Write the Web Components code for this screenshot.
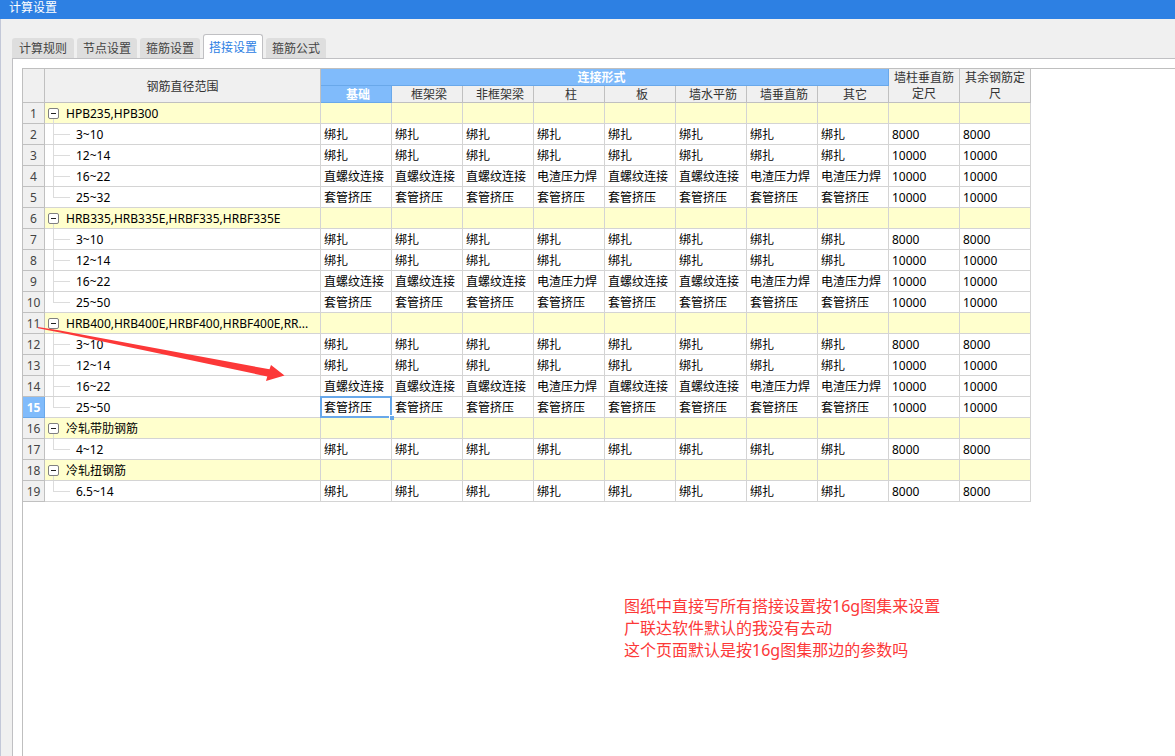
<!DOCTYPE html>
<html lang="zh-CN">
<head>
<meta charset="utf-8">
<title>计算设置</title>
<style>
  html, body { margin: 0; height: 100%; }
  body { font: 12px/20px "Noto Sans", "Noto Sans CJK SC", sans-serif; color: #000; background: #f0f0f0; overflow: hidden; }
</style>
</head>
<body>
<settings-window>
  <title-bar slot="title">计算设置</title-bar>
  <tab-strip slot="tabs">
    <tab-item>计算规则</tab-item>
    <tab-item>节点设置</tab-item>
    <tab-item>箍筋设置</tab-item>
    <tab-item active>搭接设置</tab-item>
    <tab-item>箍筋公式</tab-item>
  </tab-strip>
  <lap-table></lap-table>
  <pointer-arrow></pointer-arrow>
  <sticky-note>图纸中直接写所有搭接设置按16g图集来设置<br>广联达软件默认的我没有去动<br>这个页面默认是按16g图集那边的参数吗</sticky-note>
</settings-window>

<template id="window-tpl">
  <style>
    :host { display: flex; flex-direction: column; min-height: 100%; position: relative; }
    .body { flex: 1; display: flex; flex-direction: column; padding: 15px 0 0 11px; border-left: 1px solid #c3c8d8; }
    .panel { flex: 1; display: flex; margin-top: -1px; background: #fff; border: solid #c0c0c3; border-width: 1px 0 0 1px; padding: 9px 0 0 9px; }
    .sheet { flex: 1; border: solid #bfbfbf; border-width: 1px 0 0 1px; }
  </style>
  <slot name="title"></slot>
  <div class="body">
    <slot name="tabs"></slot>
    <main class="panel"><div class="sheet"><slot></slot></div></main>
  </div>
</template>

<template id="title-tpl">
  <style>
    :host { display: block; height: 19px; font-family: "Noto Sans CJK SC", sans-serif; line-height: 13px; padding-left: 9px; background: #2d80e3; color: #fff; }
  </style>
  <slot></slot>
</template>

<template id="strip-tpl">
  <style>:host { display: flex; align-items: flex-end; gap: 3px; position: relative; height: 25px; }</style>
  <slot></slot>
</template>

<template id="tab-tpl">
  <style>
    :host { display: block; align-self: flex-end; margin-bottom: 1px; }
    :host(:first-child) button { padding: 0 7px; }
    button { display: block; height: 20px; padding: 0 6px; border: 0; border-radius: 3px 3px 0 0; background: #dedede; color: #444; font: inherit; line-height: 22px; }
    :host([active]) { margin-bottom: 0; }
    :host([active]) button { height: 25px; padding: 0 5px; border: 1px solid #c0c0c3; border-bottom: 0; background: #fff; color: #2d80e3; line-height: 26px; }
  </style>
  <button type="button" role="tab"><slot></slot></button>
</template>

<template id="table-tpl">
  <style>
    :host { display: block; }
    table { table-layout: fixed; width: 1008px; border-collapse: separate; border-spacing: 0; }
    .num { width: 22px; } .name { width: 276px; }
    th, td { box-sizing: border-box; padding: 0; border: solid #d4d4d4; border-width: 0 1px 1px 0; overflow: hidden; }
    thead th { height: 17px; padding-top: 2px; background: #f0f0f0; border-color: #c0c0c0; color: #333; font-weight: 400; line-height: 14px; }
    thead .tall { padding-top: 1px; line-height: 16px; }
    thead .span { padding-right: 6px; }
    thead .sub { padding-left: 4px; }
    thead .hot, tbody .hot { background: #80bbfb; border-color: #69a8ea; color: #fff; font-weight: 700; }
    tbody th, td { height: 21px; padding-top: 2px; line-height: 18px; }
    tbody th { background: #f0f0f0; border-color: #c0c0c0; color: #444; font-weight: 400; text-align: center; }
    td { padding-left: 3px; white-space: nowrap; }
    .group td { background: #ffffcd; }
    td.label { position: relative; padding-left: 31px; }
    .group td.label { padding-left: 21px; }
    .label button { position: absolute; left: 3px; top: 5px; width: 11px; height: 11px; padding: 0; border: 1px solid #808080; border-radius: 2px; background: #fff; }
    .label button::before { content: ""; position: absolute; left: 2px; top: 4px; width: 5px; height: 1px; background: #222; }
    .group .label::before { content: ""; position: absolute; left: 8px; top: 16px; bottom: 0; border-left: 1px solid #dcdcdc; }
    .leaf .label::before { content: ""; position: absolute; left: 8px; top: 0; bottom: 0; border-left: 1px solid #dcdcdc; }
    .leaf.last .label::before { bottom: 10px; }
    .leaf .label::after { content: ""; position: absolute; left: 8px; top: 10px; width: 17px; border-top: 1px solid #dcdcdc; }
    td.current { position: relative; overflow: visible; }
    td.current::before { content: ""; position: absolute; inset: -1px; border: 2px solid #69a8ea; }
    td.current::after { content: ""; position: absolute; right: -3px; bottom: -3px; width: 4px; height: 4px; background: #69a8ea; border: solid #fff; border-width: 1px 0 0 1px; }
  </style>
  <table>
    <colgroup><col class="num"><col class="name"><col span="10"></colgroup>
    <thead>
      <tr><th rowspan="2"></th><th rowspan="2">钢筋直径范围</th><th class="hot span" colspan="8">连接形式</th><th class="tall" rowspan="2">墙柱垂直筋定尺</th><th class="tall" rowspan="2">其余钢筋定尺</th></tr>
      <tr><th class="sub hot">基础</th><th class="sub">框架梁</th><th class="sub">非框架梁</th><th class="sub">柱</th><th class="sub">板</th><th class="sub">墙水平筋</th><th class="sub">墙垂直筋</th><th class="sub">其它</th></tr>
    </thead>
    <tbody></tbody>
  </table>
</template>

<template id="arrow-tpl">
  <style>
    :host { position: absolute; left: 36px; top: 325px; pointer-events: none; }
    svg { display: block; }
  </style>
  <svg width="252" height="60" viewBox="36 325 252 60" aria-hidden="true">
    <path d="M38 327 L60 330.5 L269.5 369.3 L271 365 L284.5 375.5 L266 381 L267.3 376.5 L60 332.6 L38 328.2 Z" fill="#fc3838"/>
  </svg>
</template>

<template id="note-tpl">
  <style>:host { position: absolute; left: 624px; top: 595px; color: #fc3838; font-size: 16px; line-height: 22px; white-space: nowrap; }</style>
  <slot></slot>
</template>

<script>
  const define = (name, templateId, setup) => customElements.define(name, class extends HTMLElement {
    constructor() {
      super();
      const root = this.attachShadow({ mode: "open" });
      root.append(document.getElementById(templateId).content.cloneNode(true));
      if (setup) setup(root);
    }
  });

  const fill = (text) => Array(8).fill(text);
  const TIE = fill("绑扎");
  const SLEEVE = fill("套管挤压");
  const T = "直螺纹连接", W = "电渣压力焊";
  const THREAD = [T, T, T, W, T, T, W, W];
  const ranges = (largest) => [
    ["3~10", TIE, 8000], ["12~14", TIE, 10000], ["16~22", THREAD, 10000], [largest, SLEEVE, 10000]
  ];
  const GROUPS = [
    ["HPB235,HPB300", ranges("25~32")],
    ["HRB335,HRB335E,HRBF335,HRBF335E", ranges("25~50")],
    ["HRB400,HRB400E,HRBF400,HRBF400E,RR...", ranges("25~50")],
    ["冷轧带肋钢筋", [["4~12", TIE, 8000]]],
    ["冷轧扭钢筋", [["6.5~14", TIE, 8000]]]
  ];
  const CURRENT_ROW = 15;

  define("settings-window", "window-tpl");
  define("title-bar", "title-tpl");
  define("tab-strip", "strip-tpl");
  define("tab-item", "tab-tpl");
  define("pointer-arrow", "arrow-tpl");
  define("sticky-note", "note-tpl");
  define("lap-table", "table-tpl", (root) => {
    let n = 0, html = "";
    for (const [title, rows] of GROUPS) {
      html += `<tr class="group"><th scope="row">${++n}</th><td class="label"><button type="button" aria-label="折叠"></button>${title}</td>${"<td></td>".repeat(10)}</tr>`;
      rows.forEach(([range, joints, length], i) => {
        const here = ++n === CURRENT_ROW;
        const cells = [...joints, length, length]
          .map((v, c) => `<td${here && c === 0 ? ' class="current"' : ""}>${v}</td>`).join("");
        html += `<tr class="leaf${i === rows.length - 1 ? " last" : ""}"><th scope="row"${here ? ' class="hot"' : ""}>${n}</th><td class="label">${range}</td>${cells}</tr>`;
      });
    }
    root.querySelector("tbody").innerHTML = html;
  });
</script>
</body>
</html>
